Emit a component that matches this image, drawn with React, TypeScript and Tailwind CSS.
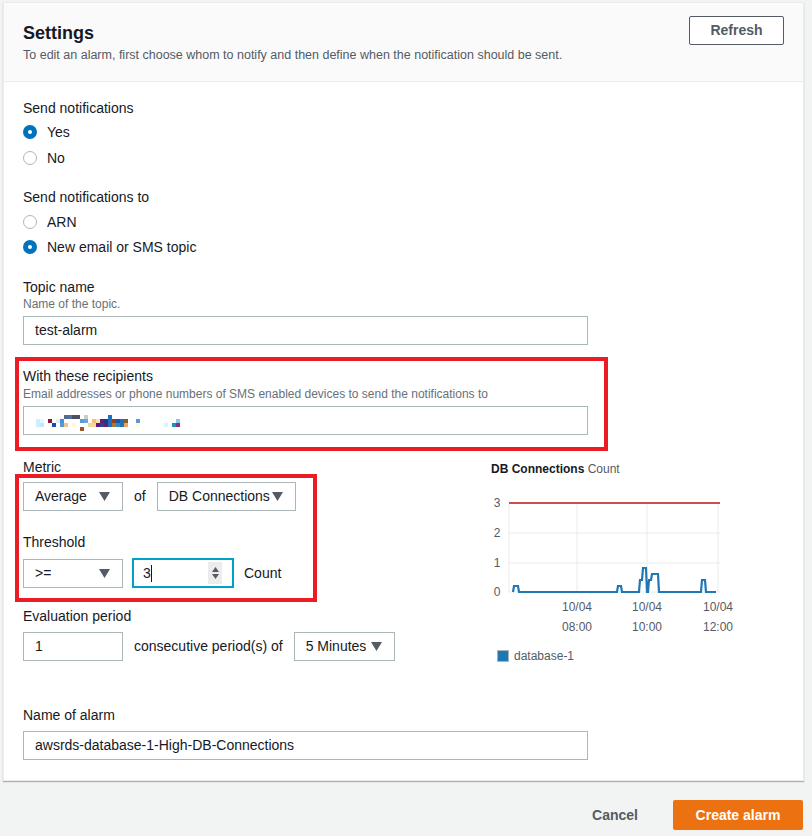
import React from 'react';

const labelCls = 'text-[14px] leading-[18px] text-[#16191f]';
const descCls = 'text-[12px] leading-[16px] text-[#687078]';
const boxCls = 'h-[29px] border border-[#aab7b8] bg-white flex items-center text-[14px] text-[#16191f]';

// pixelated (redacted) address in the recipients field
const redacted: [number, number, string][] = [
  [7, 0, '#5a6a85'], [8, 0, '#4f6fa8'], [9, 0, '#4a5068'], [10, 0, '#4a5068'], [12, 0, '#cccccc'], [18, 0, '#1f6fbf'],
  [0, 1, '#cdeffd'], [1, 1, '#e6f7fe'], [3, 1, '#8b1a4a'], [5, 1, '#d6f3fe'], [6, 1, '#4d8fd6'], [11, 1, '#5b9bd5'],
  [12, 1, '#6aa6da'], [14, 1, '#f0c27a'], [15, 1, '#fbe3b0'], [16, 1, '#6a1d6e'], [17, 1, '#1a3a8a'], [18, 1, '#1f6fbf'],
  [19, 1, '#8b4513'], [20, 1, '#2b4f9f'], [21, 1, '#1f6fbf'], [22, 1, '#8b5a2b'], [25, 1, '#5b9bd5'], [35, 1, '#8ac6f2'],
  [0, 2, '#cdeffd'], [1, 2, '#bfe9fb'], [4, 2, '#1f4fa0'], [6, 2, '#5b9bd5'], [7, 2, '#f5c28a'], [9, 2, '#fff8d0'],
  [13, 2, '#f5d7a0'], [14, 2, '#f5d7a0'], [15, 2, '#5a1a7a'], [16, 2, '#2b3f9f'], [17, 2, '#6a1d6e'], [18, 2, '#1f6fbf'],
  [19, 2, '#b8742a'], [20, 2, '#1f8fcf'], [21, 2, '#2b6faf'], [22, 2, '#e8a860'], [25, 2, '#fffbe0'], [32, 2, '#d0f8ff'],
  [34, 2, '#1f8fbf'], [35, 2, '#8b2f7f'],
  [11, 3, '#a0522d'],
];

function Caret() {
  return (
    <svg width="11" height="9" viewBox="0 0 11 9" className="shrink-0">
      <path d="M0 0 L11 0 L5.5 9 Z" fill="#545b64" />
    </svg>
  );
}

function Select({ value, w }: { value: string; w: string }) {
  return (
    <div className={`${boxCls} ${w} justify-between pl-[11px] pr-[12px]`}>
      <span className="whitespace-nowrap overflow-hidden">{value}</span>
      <Caret />
    </div>
  );
}

function Radio({ checked, label }: { checked?: boolean; label: string }) {
  return (
    <div className="flex items-center gap-[10px] h-[20px]">
      <span
        className={
          checked
            ? 'w-[14px] h-[14px] rounded-full border-[5px] border-[#0073bb] bg-white'
            : 'w-[14px] h-[14px] rounded-full border border-[#aab7b8] bg-white'
        }
      />
      <span className="text-[14px] text-[#16191f]">{label}</span>
    </div>
  );
}

function Chart() {
  const grid = '#e9ebed';
  const data =
    'M22,104 L23,98 L27,98 L28,104 L126,104 L127,98 L130,98 L131,104 L148,104 L149,92 L151,92 L152,80 L155,80 L156,104 L157,104 L158,92 L160,92 L161,86 L167,86 L168,104 L210,104 L211,92 L214,92 L215,104 L225,104';
  return (
    <svg width="250" height="172" viewBox="0 0 250 172" className="overflow-visible">
      {[15, 45, 75, 104].map((y) => (
        <line key={y} x1="18" x2="229" y1={y} y2={y} stroke={grid} strokeWidth="1" />
      ))}
      {[18, 86, 156, 227].map((x) => (
        <line key={x} x1={x} x2={x} y1="15" y2="104" stroke={grid} strokeWidth="1" />
      ))}
      <line x1="18" x2="229" y1="15" y2="15" stroke="#c0161b" strokeWidth="1.5" />
      {['3', '2', '1', '0'].map((t, i) => (
        <text key={t} x="6" y={[15, 45, 75, 104][i] + 4} textAnchor="middle" fontSize="12" fill="#545b64">
          {t}
        </text>
      ))}
      {[86, 156, 227].map((x, i) => (
        <g key={x}>
          <text x={x} y="123" textAnchor="middle" fontSize="12" fill="#545b64">10/04</text>
          <text x={x} y="143" textAnchor="middle" fontSize="12" fill="#545b64">
            {['08:00', '10:00', '12:00'][i]}
          </text>
        </g>
      ))}
      <path d={data} fill="none" stroke="#1f77b4" strokeWidth="2.2" strokeLinejoin="miter" />
      <rect x="6.5" y="162.5" width="11" height="11" fill="#1f77b4" stroke="#aab7b8" />
      <text x="23" y="172" fontSize="12" fill="#545b64">database-1</text>
    </svg>
  );
}

export default function App() {
  return (
    <div className="w-[812px] min-h-[836px] bg-[#f2f3f3] pt-[2px] pl-[3px] font-['Liberation_Sans',Arial,sans-serif]">
      <div className="w-[801px] bg-white border border-[#eaeded] shadow-[0_1px_1px_0_rgba(0,28,36,0.3)]">
        {/* Header */}
        <div className="bg-[#fafafa] border-b border-[#eaeded] flex justify-between items-start pl-[19px] pr-[19px] pt-[13px] pb-[18px]">
          <div className="mt-[6px]">
            <h2 className="text-[18px] leading-[22px] font-bold text-[#16191f]">Settings</h2>
            <p className="text-[12.5px] leading-[16px] text-[#545b64] mt-[3px]">
              To edit an alarm, first choose whom to notify and then define when the notification should be sent.
            </p>
          </div>
          <button className="w-[95px] h-[29px] border border-[#545b64] rounded-[2px] bg-white text-[14px] font-bold text-[#545b64]">
            Refresh
          </button>
        </div>

        {/* Body */}
        <div className="pl-[19px] pt-[16px] pb-[20px]">
          <div className="text-[14px] leading-[20px] text-[#16191f] mb-[4px]">Send notifications</div>
          <div className="flex flex-col gap-[6px]">
            <Radio checked label="Yes" />
            <Radio label="No" />
          </div>

          <div className="text-[14px] leading-[20px] text-[#16191f] mt-[19px] mb-[5px]">Send notifications to</div>
          <div className="flex flex-col gap-[5px]">
            <Radio label="ARN" />
            <Radio checked label="New email or SMS topic" />
          </div>

          <div className="mt-[21px]">
            <div className={labelCls}>Topic name</div>
            <div className={descCls}>Name of the topic.</div>
            <div className={`${boxCls} w-[565px] mt-[4px] pl-[11px]`}>test-alarm</div>
          </div>

          <div className="relative mt-[22px]">
            <div className="absolute left-[-8px] top-[-10px] w-[593px] h-[94px] border-[4px] border-[#ec1c24] pointer-events-none" />
            <div className={labelCls}>With these recipients</div>
            <div className={`${descCls} mt-[1px]`}>
              Email addresses or phone numbers of SMS enabled devices to send the notifications to
            </div>
            <div className={`${boxCls} w-[565px] mt-[4px] pl-[12px] !items-start pt-[8px]`}>
              <svg width="144" height="16" viewBox="0 0 144 16">
                {redacted.map(([c, r, color], i) => (
                  <rect key={i} x={c * 4} y={r * 4} width="4" height="4" fill={color} />
                ))}
              </svg>
            </div>
          </div>

          <div className="flex items-start mt-[23px]">
            <div className="w-[468px] shrink-0">
              <div className={labelCls}>Metric</div>
              <div className="relative mt-[6px]">
                <div className="absolute left-[-8px] top-[-8px] w-[302px] h-[128px] border-[4px] border-[#ec1c24] pointer-events-none" />
                <div className="flex items-center">
                  <Select value="Average" w="w-[100px]" />
                  <span className="mx-[11px] text-[14px] text-[#16191f]">of</span>
                  <Select value="DB Connections" w="w-[139px]" />
                </div>
                <div className={`${labelCls} mt-[22px]`}>Threshold</div>
                <div className="flex items-center mt-[7px]">
                  <Select value=">=" w="w-[100px]" />
                  <div className="ml-[9px] w-[102px] h-[30px] border-[2px] border-[#00a1c9] bg-white flex items-center pl-[9px] pr-[10px]">
                    <span className="text-[14px] text-[#16191f]">3</span>
                    <span className="w-[1px] h-[17px] bg-[#16191f]" />
                    <span className="ml-auto w-[14px] h-[22px] bg-[#ececec] flex flex-col items-center justify-center gap-[2px]">
                      <svg width="7" height="5" viewBox="0 0 7 5"><path d="M0 5 L3.5 0 L7 5 Z" fill="#545b64" /></svg>
                      <svg width="7" height="5" viewBox="0 0 7 5"><path d="M0 0 L7 0 L3.5 5 Z" fill="#545b64" /></svg>
                    </span>
                  </div>
                  <span className="ml-[10px] text-[14px] text-[#16191f]">Count</span>
                </div>
              </div>
              <div className={`${labelCls} mt-[19px]`}>Evaluation period</div>
              <div className="flex items-center mt-[7px]">
                <div className={`${boxCls} w-[100px] pl-[11px]`}>1</div>
                <span className="mx-[11px] text-[14px] text-[#16191f] whitespace-nowrap">consecutive period(s) of</span>
                <Select value="5 Minutes" w="w-[101px]" />
              </div>
            </div>
            <div className="pt-[3px]">
              <div className="text-[12px] leading-[16px] text-[#545b64] whitespace-nowrap">
                <span className="font-bold text-[#16191f]">DB Connections</span> Count
              </div>
              <div className="mt-[11px]">
                <Chart />
              </div>
            </div>
          </div>

          <div className="mt-[45px]">
            <div className={labelCls}>Name of alarm</div>
            <div className={`${boxCls} w-[565px] mt-[7px] pl-[11px]`}>awsrds-database-1-High-DB-Connections</div>
          </div>
        </div>
      </div>

      {/* Footer */}
      <div className="flex justify-end items-center mt-[19px] pr-[9px]">
        <button className="mr-[35px] text-[14px] font-bold text-[#545b64]">Cancel</button>
        <button className="w-[130px] h-[30px] rounded-[2px] bg-[#ec7211] text-[14px] font-bold text-white">
          Create alarm
        </button>
      </div>
    </div>
  );
}
